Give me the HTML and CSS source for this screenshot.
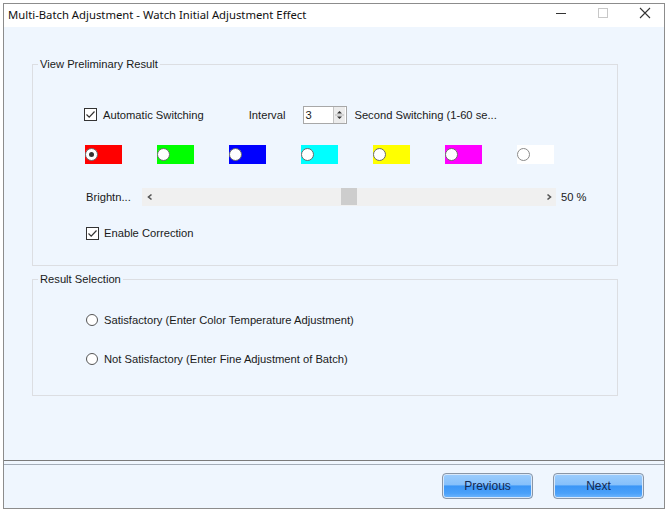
FILE: index.html
```html
<!DOCTYPE html>
<html>
<head>
<meta charset="utf-8">
<link rel="stylesheet" href="styles.css">
</head>
<body>
<div class="window">
  <div class="titlebar">
    <span class="title">Multi-Batch Adjustment - Watch Initial Adjustment Effect</span>
    <div class="controls">
      <svg class="ctl" width="12" height="12" viewBox="0 0 12 12"><path d="M1 6.5H11" stroke="#333" stroke-width="1"/></svg>
      <svg class="ctl" width="12" height="12" viewBox="0 0 12 12"><rect x="1.5" y="1.5" width="9" height="9" fill="none" stroke="#c8c8c8"/></svg>
      <svg class="ctl" width="12" height="12" viewBox="0 0 12 12"><path d="M1 1L11 11M11 1L1 11" stroke="#333" stroke-width="1.1"/></svg>
    </div>
  </div>
  <div class="content">
    <fieldset class="group group-view">
      <legend>View Preliminary Result</legend>
      <div class="row row-auto">
        <span class="check"><svg width="13" height="13" viewBox="0 0 13 13"><rect x="0.5" y="0.5" width="12" height="12" fill="#fff" stroke="#333"/><path d="M2.5 6.5L5.2 9.2L10.5 3.5" fill="none" stroke="#333" stroke-width="1.2"/></svg></span>
        <span class="lbl">Automatic Switching</span>
        <span class="lbl interval">Interval</span>
        <span class="spin">
          <span class="spin-val">3</span>
          <span class="spin-btns">
            <svg width="11" height="16" viewBox="0 0 11 16"><path d="M3 6.5L5.5 4L8 6.5Z" fill="#333"/><path d="M1 8H10" stroke="#b8b8b8"/><path d="M3 9.5L5.5 12L8 9.5Z" fill="#333"/></svg>
          </span>
        </span>
        <span class="lbl secs">Second Switching (1-60 se...</span>
      </div>
      <div class="row swatches">
        <span class="swatch" style="background:#ff0000"><span class="radio on"></span></span>
        <span class="swatch" style="background:#00ff00"><span class="radio"></span></span>
        <span class="swatch" style="background:#0000ff"><span class="radio"></span></span>
        <span class="swatch" style="background:#00ffff"><span class="radio"></span></span>
        <span class="swatch" style="background:#ffff00"><span class="radio"></span></span>
        <span class="swatch" style="background:#ff00ff"><span class="radio"></span></span>
        <span class="swatch" style="background:#ffffff"><span class="radio grey"></span></span>
      </div>
      <div class="row bright">
        <span class="lbl blabel">Brightn...</span>
        <div class="track">
          <svg class="arrow" width="8" height="8" viewBox="0 0 8 8"><path d="M5.5 1.5L2.5 4L5.5 6.5" fill="none" stroke="#555" stroke-width="1.6"/></svg>
          <div class="track-mid"><div class="thumb-gap" style="width:184px"></div><div class="thumb"></div></div>
          <svg class="arrow" width="8" height="8" viewBox="0 0 8 8"><path d="M2.5 1.5L5.5 4L2.5 6.5" fill="none" stroke="#555" stroke-width="1.6"/></svg>
        </div>
        <span class="lbl pct">50 %</span>
      </div>
      <div class="row row-enable">
        <span class="check"><svg width="13" height="13" viewBox="0 0 13 13"><rect x="0.5" y="0.5" width="12" height="12" fill="#fff" stroke="#333"/><path d="M2.5 6.5L5.2 9.2L10.5 3.5" fill="none" stroke="#333" stroke-width="1.2"/></svg></span>
        <span class="lbl">Enable Correction</span>
      </div>
    </fieldset>
    <fieldset class="group group-result">
      <legend>Result Selection</legend>
      <div class="row opt opt1">
        <span class="radio plain"></span>
        <span class="lbl">Satisfactory (Enter Color Temperature Adjustment)</span>
      </div>
      <div class="row opt opt2">
        <span class="radio plain"></span>
        <span class="lbl">Not Satisfactory (Enter Fine Adjustment of Batch)</span>
      </div>
    </fieldset>
  </div>
  <div class="footer">
    <button class="btn">Previous</button>
    <button class="btn">Next</button>
  </div>
</div>
</body>
</html>
```

FILE: styles.css
```css
html, body {
  margin: 0;
  padding: 0;
  background: #ffffff;
}
body {
  padding: 3px 0 0 3px;
  font-family: "Liberation Sans", Arial, sans-serif;
  font-size: 12px;
  color: #1a1a1a;
}
.window {
  width: 660px;
  height: 504px;
  border: 1px solid #8c8c8c;
  display: flex;
  flex-direction: column;
  background: #eff6fe;
}
.titlebar {
  height: 23px;
  background: #ffffff;
  display: flex;
  align-items: center;
  justify-content: space-between;
  flex: none;
}
.title {
  font-family: "Noto Sans", "Liberation Sans", sans-serif;
  font-size: 11.3px;
  color: #111;
  margin-left: 4px;
  margin-top: -3px;
}
.controls {
  display: flex;
  gap: 30px;
  margin-right: 13px;
  margin-top: -5px;
}
.ctl { display: block; }
.content {
  flex: 1;
  display: flex;
  flex-direction: column;
  border-bottom: 1px solid #7a7a7a;
}
.group {
  margin: 0 46px 0 28px;
  padding: 0;
  border: 1px solid #dcdee2;
  min-width: 0;
}
.group legend {
  margin-left: 5px;
  padding: 0 2px;
  font-size: 11.2px;
  line-height: 14px;
  color: #1a1a1a;
}
.group-view {
  margin-top: 30px;
  padding: 35px 0 24px 0;
}
.group-view .row { margin-left: 51px; }
.group-result {
  margin-top: 6px;
  padding: 26px 0 28px 0;
}
.group-result .row { margin-left: 53px; }
.row {
  display: flex;
  align-items: center;
}
.lbl {
  font-size: 11.2px;
  white-space: nowrap;
}
.row-auto { height: 18px; }
.row-auto .check { margin-right: 6px; margin-top: -2px; }
.check svg { display: block; }
.interval { margin-left: 45px; }
.spin {
  margin-left: 18px;
  width: 42px;
  height: 16px;
  border: 1px solid #a8a8a8;
  background: #fff;
  display: flex;
  justify-content: space-between;
  align-items: center;
}
.spin-val { padding-left: 1px; font-size: 11.2px; }
.spin-btns {
  width: 11px;
  height: 16px;
  border-left: 1px solid #c4c4c4;
  background: #ececec;
  margin-right: 1px;
}
.spin-btns svg { display: block; }
.secs { margin-left: 7px; }

.group-view .swatches {
  margin-top: 21px;
  gap: 35px;
  margin-left: 52px;
}
.swatch {
  width: 37px;
  height: 19px;
  display: flex;
  align-items: center;
}
.radio {
  box-sizing: border-box;
  width: 13px;
  height: 13px;
  border-radius: 50%;
  border: 1px solid #6a6a6a;
  background: #fff;
  display: inline-block;
  position: relative;
}
.radio.on::after {
  content: "";
  position: absolute;
  left: 3px;
  top: 3px;
  width: 5px;
  height: 5px;
  border-radius: 50%;
  background: #333;
}
.radio.grey { border-color: #8a8a8a; }

.group-view .bright { margin-top: 24px; height: 18px; margin-left: 53px; }
.blabel { width: 56px; }
.track {
  width: 414px;
  height: 18px;
  background: #f0f0f0;
  display: flex;
  align-items: center;
}
.arrow { flex: none; margin: 0 3px 0 4px; }
.track-mid {
  flex: 1;
  height: 18px;
  display: flex;
}
.thumb {
  width: 16px;
  height: 17px;
  background: #cdcdcd;
}
.pct { margin-left: 5px; }

.group-view .row-enable { margin-top: 19px; height: 16px; margin-left: 53px; }
.row-enable .check { margin-right: 5px; }

.opt { height: 16px; }
.opt .radio { width: 12px; height: 12px; border-color: #555; margin-right: 6px; }
.opt2 { margin-top: 23px; }

.footer {
  flex: none;
  height: 44px;
  border-top: 3px solid #eff6fe;
  box-shadow: inset 0 1px 0 #a4adb8;
  display: flex;
  justify-content: flex-end;
  align-items: center;
  gap: 20px;
  padding-right: 20px;
}
.btn {
  width: 91px;
  height: 26px;
  border: 1px solid #8a96a6;
  border-radius: 4px;
  box-shadow: inset 0 0 0 1px #d8e8fa;
  background: linear-gradient(#9ccdfd 0%, #86c0fb 45%, #3b96f6 50%, #4aa1fa 80%, #6fb6fd 100%);
  font-family: "Liberation Sans", Arial, sans-serif;
  font-size: 12px;
  color: #142850;
  padding: 0;
}
```
